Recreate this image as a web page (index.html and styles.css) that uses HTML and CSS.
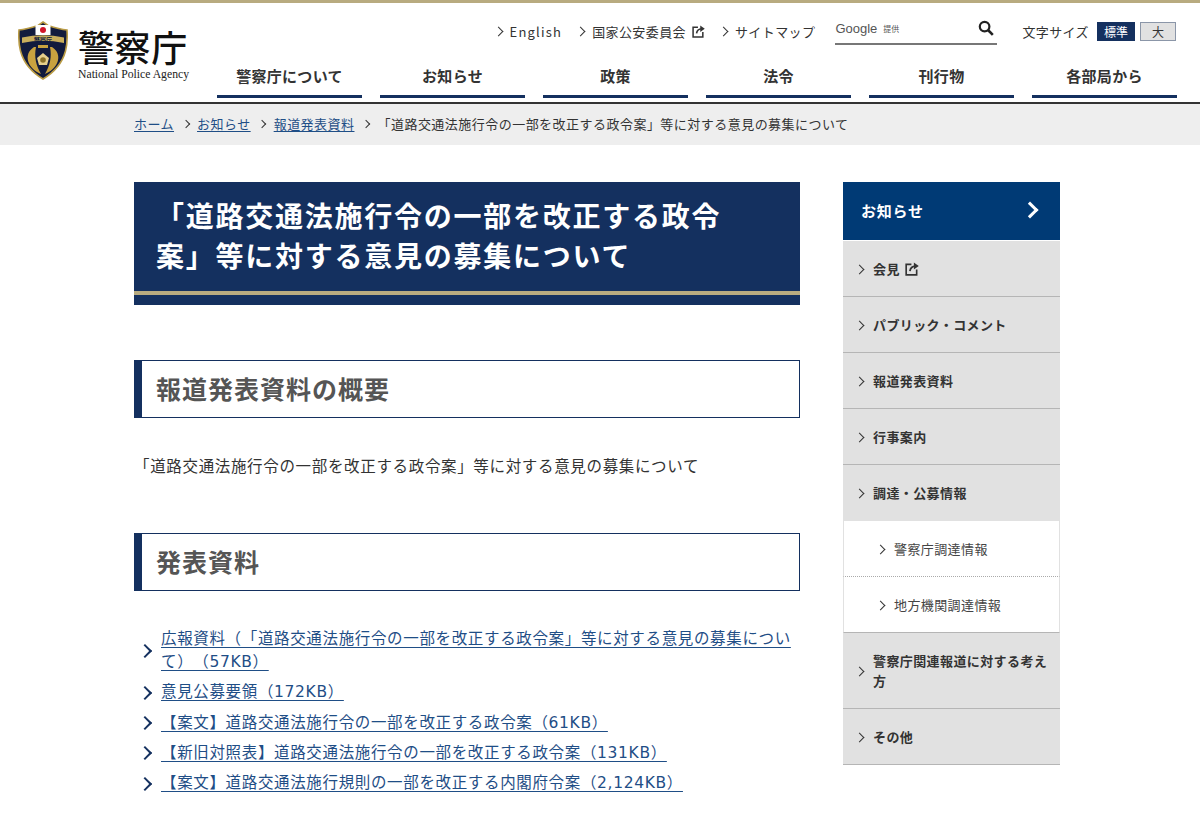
FILE: index.html
```html
<!DOCTYPE html>
<html lang="ja">
<head>
<meta charset="utf-8">
<title>「道路交通法施行令の一部を改正する政令案」等に対する意見の募集について</title>
<link rel="stylesheet" href="styles.css">
</head>
<body>
<svg class="defs" width="0" height="0" aria-hidden="true">
  <symbol id="ext" viewBox="0 0 12 12">
    <path d="M5.500 2H1v9h9V6.500" fill="none" stroke="currentColor" stroke-width="1.400"/>
    <path d="M4.200 7.800c.4-2.800 2.200-4.200 4.800-4.300" fill="none" stroke="currentColor" stroke-width="1.500"/>
    <path d="M7.600 .4 11.800 3.400 7.600 6.400z" fill="currentColor"/>
  </symbol>
</svg>
<header class="site-header">
  <div class="brand">
    <svg class="emblem" viewBox="0 0 50 59" aria-hidden="true">
      <path d="M25 1 30 4.500C36 6.500 43 8.500 49 9 49.500 16 49 24 47.500 30 44 43 35 52 25 58 15 52 6 43 2.500 30 1 24 .5 16 1 9 7 8.500 14 6.500 20 4.500Z" fill="#121b3d" stroke="#b99b45" stroke-width="1.600"/>
      <rect x="17.500" y="4" width="15" height="10" fill="#fff"/>
      <circle cx="25" cy="9" r="3" fill="#d3162a"/>
      <path d="M4 16.500Q25 12 46 16.500L46 22Q25 17.500 4 22Z" fill="#c9ae5c"/>
      <text class="emblem-text" x="25" y="20.500" text-anchor="middle">警察庁</text>
      <path d="M16 26C5 33 9 47 23 53 18 44 16 36 18 26Z" fill="#c9a23f"/>
      <path d="M34 26C45 33 41 47 27 53 32 44 34 36 32 26Z" fill="#c9a23f"/>
      <path d="M25 32 31 37 29 44H21L19 37Z" fill="#e5cf8c"/>
      <circle cx="25" cy="39" r="2.800" fill="#8a7128"/>
      <rect x="20" y="24" width="10" height="3" fill="#c9a23f"/>
    </svg>
    <div class="brand-text">
      <div class="brand-jp">警察庁</div>
      <div class="brand-en">National Police Agency</div>
    </div>
  </div>
  <div class="header-main">
    <div class="util">
      <a class="util-link chev" href="#"><span class="en">English</span></a>
      <a class="util-link chev" href="#">国家公安委員会<svg class="ext"><use href="#ext"/></svg></a>
      <a class="util-link chev" href="#">サイトマップ</a>
      <div class="search">
        <span class="google">Google</span><span class="provided">提供</span>
        <svg class="search-icon" viewBox="0 0 16 16" aria-hidden="true">
          <circle cx="6.600" cy="6.600" r="4.800" fill="none" stroke="#222" stroke-width="2.200"/>
          <path d="M10 10l4.800 4.800" stroke="#222" stroke-width="2.600"/>
        </svg>
      </div>
      <span class="size-label">文字サイズ</span>
      <span class="size-btn size-on">標準</span>
      <span class="size-btn size-off">大</span>
    </div>
    <nav class="gnav">
      <a href="#">警察庁について</a>
      <a href="#">お知らせ</a>
      <a href="#">政策</a>
      <a href="#">法令</a>
      <a href="#">刊行物</a>
      <a href="#">各部局から</a>
    </nav>
  </div>
</header>
<div class="crumbs">
  <a href="#">ホーム</a><span class="crumb-sep"></span>
  <a href="#">お知らせ</a><span class="crumb-sep"></span>
  <a href="#">報道発表資料</a><span class="crumb-sep"></span>
  <span>「道路交通法施行令の一部を改正する政令案」等に対する意見の募集について</span>
</div>
<div class="layout">
  <main class="content">
    <h1 class="title"><span class="title-text">「道路交通法施行令の一部を改正する政令案」等に対する意見の募集について</span></h1>
    <h2 class="section">報道発表資料の概要</h2>
    <p class="lead">「道路交通法施行令の一部を改正する政令案」等に対する意見の募集について</p>
    <h2 class="section">発表資料</h2>
    <ul class="files">
      <li><a href="#">広報資料（「道路交通法施行令の一部を改正する政令案」等に対する意見の募集について）（57KB）</a></li>
      <li><a href="#">意見公募要領（172KB）</a></li>
      <li><a href="#">【案文】道路交通法施行令の一部を改正する政令案（61KB）</a></li>
      <li><a href="#">【新旧対照表】道路交通法施行令の一部を改正する政令案（131KB）</a></li>
      <li><a href="#">【案文】道路交通法施行規則の一部を改正する内閣府令案（2,124KB）</a></li>
    </ul>
  </main>
  <aside class="side">
    <a class="side-head" href="#">お知らせ</a>
    <a class="side-item" href="#"><span>会見<svg class="ext"><use href="#ext"/></svg></span></a>
    <a class="side-item" href="#"><span>パブリック・コメント</span></a>
    <a class="side-item" href="#"><span>報道発表資料</span></a>
    <a class="side-item" href="#"><span>行事案内</span></a>
    <a class="side-item side-open" href="#"><span>調達・公募情報</span></a>
    <a class="side-sub side-dotted" href="#"><span>警察庁調達情報</span></a>
    <a class="side-sub" href="#"><span>地方機関調達情報</span></a>
    <a class="side-item side-tall" href="#"><span>警察庁関連報道に対する考え方</span></a>
    <a class="side-item" href="#"><span>その他</span></a>
  </aside>
</div>
</body>
</html>
```
FILE: styles.css
```css
* { box-sizing: border-box; }
html, body { margin: 0; padding: 0; }
body {
  background: #fff;
  color: #333;
  font-family: "Noto Sans CJK JP", "Noto Sans", sans-serif;
  font-size: 15px;
  text-spacing-trim: space-all;
  overflow: hidden;
}
a { color: inherit; text-decoration: none; }
.defs { position: absolute; }

.site-header {
  display: flex;
  height: 104px;
  border-top: 3px solid #b8ab80;
  border-bottom: 2px solid #333;
}
.brand {
  width: 217px;
  flex: none;
  display: flex;
  align-items: flex-start;
  padding: 18px 0 0 18px;
}
.emblem { width: 50px; height: 59px; flex: none; }
.emblem-text { font-size: 6px; font-weight: 700; fill: #121b3d; }
.brand-text { margin-left: 10px; }
.brand-jp {
  font-size: 36px;
  line-height: 44px;
  font-weight: 500;
  color: #111;
  letter-spacing: .6px;
  margin-top: 3px;
}
.brand-en {
  font-family: "Liberation Serif", serif;
  font-size: 11.700px;
  line-height: 14px;
  color: #222;
  white-space: nowrap;
}

.header-main { flex: 1; min-width: 0; }
.util {
  display: flex;
  align-items: center;
  justify-content: flex-end;
  height: 54px;
  padding-top: 3px;
  font-size: 13px;
  letter-spacing: .4px;
  color: #333;
}
.en { letter-spacing: 1.200px; }
.util-link { display: flex; align-items: center; margin-right: 15px; white-space: nowrap; }
.util-link.chev::before,
.files li::before,
.side-item span::before,
.side-sub span::before {
  content: "";
  width: 6px;
  height: 6px;
  border-top: 1.500px solid #333;
  border-right: 1.500px solid #333;
  transform: rotate(45deg);
  flex: none;
}
.util-link.chev::before { margin-right: 8px; }
.ext { width: 13px; height: 13px; margin-left: 6px; flex: none; vertical-align: -1px; }
.search {
  position: relative;
  width: 162px;
  height: 27px;
  margin: 0 25px 0 5px;
  border-bottom: 2px solid #777;
  display: flex;
  align-items: center;
  padding-bottom: 4px;
}
.google { font-family: "Liberation Sans", sans-serif; font-size: 13px; letter-spacing: 0; color: #555; }
.provided { font-size: 8px; margin-left: 6px; color: #555; letter-spacing: 0; }
.search-icon { position: absolute; right: 3px; top: 2px; width: 16px; height: 16px; }
.size-label { margin-right: 8px; white-space: nowrap; }
.size-btn {
  display: flex;
  align-items: center;
  justify-content: center;
  height: 19px;
  font-size: 12px;
  letter-spacing: 0;
}
.size-on { width: 38px; background: #14305f; color: #fff; margin-right: 5px; }
.size-off { width: 36px; background: #e1e1e1; border: 1px solid #8b96a8; color: #333; margin-right: 24px; }

.gnav {
  display: flex;
  gap: 18px;
  padding-right: 23px;
  justify-content: flex-end;
}
.gnav a {
  width: 145px;
  height: 41px;
  padding-bottom: 1px;
  display: flex;
  align-items: center;
  justify-content: center;
  font-size: 15px;
  letter-spacing: .3px;
  font-weight: 700;
  color: #333;
  border-bottom: 3px solid #14305f;
}

.crumbs {
  height: 41px;
  background: #eee;
  padding: 0 0 2px 134px;
  display: flex;
  align-items: center;
  font-size: 13px;
  letter-spacing: .47px;
  color: #333;
  white-space: nowrap;
}
.crumbs a { color: #1f4e86; text-decoration: underline; text-underline-offset: 2px; }
.crumb-sep { width: 23px; display: flex; justify-content: center; }
.crumb-sep::before {
  content: "";
  width: 5px;
  height: 5px;
  border-top: 1px solid #333;
  border-right: 1px solid #333;
  transform: rotate(45deg);
}

.layout {
  display: flex;
  gap: 43px;
  padding: 37px 0 0 134px;
}
.content { width: 666px; flex: none; }
.title {
  margin: 0 0 55px;
  height: 123px;
  padding: 13px 60px 0 22px;
  background: #14305f;
  color: #fff;
  font-size: 28px;
  line-height: 40px;
  letter-spacing: 1.750px;
  font-weight: 700;
  position: relative;
}
.title::after {
  content: "";
  position: absolute;
  left: 0;
  right: 0;
  bottom: 10px;
  height: 4px;
  background: #b8ab80;
}
.section {
  margin: 0;
  height: 58px;
  border: 1px solid #14305f;
  border-left: 8px solid #14305f;
  padding: 0 0 3px 14px;
  display: flex;
  align-items: center;
  font-size: 25px;
  letter-spacing: 1px;
  font-weight: 700;
  color: #555;
}
.lead {
  margin: 36px 0 56px;
  font-size: 15.500px;
  line-height: 23px;
  letter-spacing: .66px;
  color: #333;
}
.files {
  list-style: none;
  margin: 37px 0 0;
  padding: 0;
  font-family: "DejaVu Sans", "Noto Sans CJK JP", sans-serif;
  font-size: 15.500px;
  line-height: 23px;
  letter-spacing: .65px;
}
.files li {
  display: flex;
  align-items: center;
  margin-bottom: 7.300px;
}
.files li::before {
  width: 8px;
  height: 8px;
  margin: 0 11px 0 6px;
  border-color: #14305f;
  border-width: 2px;
}
.files a { color: #1f4e86; text-decoration: underline; text-underline-offset: 3px; }

.side { width: 217px; flex: none; }
.side-head {
  display: flex;
  align-items: center;
  justify-content: space-between;
  height: 58px;
  margin-bottom: 1px;
  padding: 0 24px 2px 18px;
  background: #003a75;
  color: #fff;
  font-size: 15px;
  letter-spacing: .75px;
  font-weight: 700;
}
.side-head::after {
  content: "";
  width: 9px;
  height: 9px;
  border-top: 3px solid #fff;
  border-right: 3px solid #fff;
  transform: rotate(45deg);
}
.side-item, .side-sub {
  display: flex;
  align-items: center;
  min-height: 56px;
  font-size: 13px;
  line-height: 20px;
  letter-spacing: .4px;
}
.side-item {
  background: #e1e1e1;
  border-bottom: 1px solid #b5b5b5;
  font-weight: 700;
  color: #333;
  padding-left: 30px;
  padding-right: 10px;
}
.side-open { border-bottom: none; }
.side-tall { min-height: 76px; }
.side-sub {
  background: #fff;
  padding-left: 50px;
  color: #444;
  border-left: 1px solid #e1e1e1;
  border-right: 1px solid #e1e1e1;
}
.side-dotted { border-bottom: 1px dotted #aaa; }
.side-sub:not(.side-dotted) { border-bottom: 1px solid #b5b5b5; }
.side-item span, .side-sub span { position: relative; display: block; }
.side-item span::before, .side-sub span::before {
  position: absolute;
  left: -17px;
  top: 50%;
  margin-top: -3px;
}
.side .ext { width: 14px; height: 14px; margin-left: 5px; vertical-align: -2px; }
```
